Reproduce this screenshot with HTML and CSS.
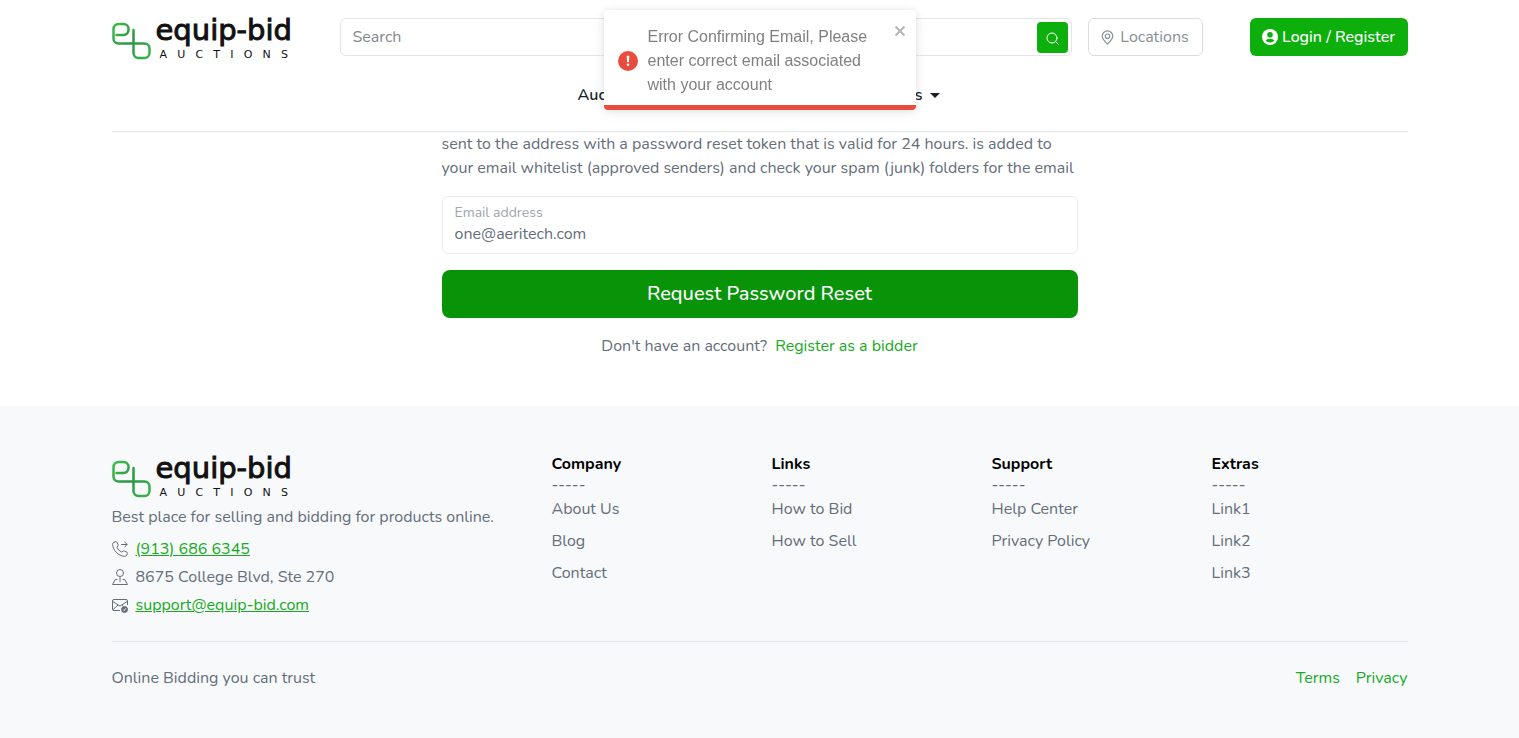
FILE: index.html
```html
<!DOCTYPE html>
<html lang="en">
<head>
<meta charset="utf-8">
<meta name="viewport" content="width=device-width, initial-scale=1">
<title>Equip-Bid Auctions</title>
<link rel="stylesheet" href="styles.css">
</head>
<body>
<svg class="defs" width="0" height="0" aria-hidden="true">
  <linearGradient id="leaf" x1="0" y1="0" x2="1" y2="1">
    <stop offset="0" stop-color="#3cc045"/><stop offset=".5" stop-color="#2b9546"/><stop offset="1" stop-color="#35b84a"/>
  </linearGradient>
  <symbol id="mark" viewBox="0 0 40 46">
    <path d="M4.500 21H11.500a5 5 0 0 0 5-5V15a5 5 0 0 0-5-5H6.500a5 5 0 0 0-5 5V24.500a5 5 0 0 0 5 5H32.500a5 5 0 0 1 5 5V39a5 5 0 0 1-5 5H26.500a5 5 0 0 1-5-5V16" fill="none" stroke="url(#leaf)" stroke-width="2.500" stroke-linecap="round"/>
  </symbol>
</svg>

<header class="header">
  <div class="container">
    <div class="topbar">
      <a class="logo" href="#">
        <svg class="logo-mark" aria-hidden="true"><use href="#mark"/></svg>
        <span class="logo-words">
          <span class="logo-name">equip-bid</span>
          <span class="logo-sub"><span>A</span><span>U</span><span>C</span><span>T</span><span>I</span><span>O</span><span>N</span><span>S</span></span>
        </span>
      </a>
      <form class="search">
        <input class="search-input" type="search" placeholder="Search" aria-label="Search">
        <button class="search-button" type="submit" aria-label="Submit search">
          <svg width="13" height="13" viewBox="0 0 13 13" fill="none" stroke="currentColor" stroke-linecap="round"><circle cx="6" cy="6" r="5"/><path d="M9.600 9.600 12.300 12.300"/></svg>
        </button>
      </form>
      <button class="locations" type="button">
        <svg width="13" height="15" viewBox="0 0 13 15" fill="none" stroke="currentColor" stroke-width="1.200"><path d="M6.500 14C4 11.500 1.200 9 1.200 6.200a5.300 5.300 0 0 1 10.600 0C11.800 9 9 11.500 6.500 14Z"/><circle cx="6.500" cy="6.200" r="2.200"/></svg>
        Locations
      </button>
      <a class="login" href="#">
        <svg width="16" height="16" viewBox="0 0 16 16"><circle cx="8" cy="8" r="8" fill="#fff"/><circle cx="8" cy="5.800" r="2.800" fill="#0caf0c"/><path d="M3.500 11.200Q5 9.700 8 9.700T12.500 11.200Q11 13.500 8 13.500T3.500 11.200Z" fill="#0caf0c"/></svg>
        Login / Register
      </a>
    </div>
    <nav class="nav">
      <button class="nav-link" type="button">Auctions</button>
      <button class="nav-link" type="button">Links <span class="caret"></span></button>
    </nav>
  </div>
</header>

<main class="container">
  <form class="reset">
    <p class="intro">sent to the address with a password reset token that is valid for 24 hours. is added to<br>your email whitelist (approved senders) and check your spam (junk) folders for the email</p>
    <div class="field">
      <label for="email">Email address</label>
      <input id="email" type="email" value="one@aeritech.com">
    </div>
    <button class="submit" type="submit">Request Password Reset</button>
    <p class="signup">Don't have an account? <a href="#">Register as a bidder</a></p>
  </form>
</main>

<footer class="footer">
  <div class="container">
    <div class="columns">
      <div class="about">
        <a class="logo" href="#">
          <svg class="logo-mark" aria-hidden="true"><use href="#mark"/></svg>
          <span class="logo-words">
            <span class="logo-name">equip-bid</span>
            <span class="logo-sub"><span>A</span><span>U</span><span>C</span><span>T</span><span>I</span><span>O</span><span>N</span><span>S</span></span>
          </span>
        </a>
        <p class="tagline">Best place for selling and bidding for products online.</p>
        <ul class="contacts">
          <li>
            <svg width="16" height="16" viewBox="0 0 16 16" fill="none" stroke="currentColor" stroke-linecap="round" stroke-linejoin="round"><path d="M1.900 1.300 3.600.6Q4.300.4 4.700 1L6.100 3.800Q6.300 4.300 6 4.800L5.100 6Q4.900 6.300 5.100 6.700 6.500 9.500 9.300 10.900 9.700 11.100 10 10.900L11.200 10Q11.700 9.700 12.200 9.900L15 11.300Q15.600 11.700 15.400 12.400L14.700 14.100Q14.200 15.500 12.500 15.400C6.500 14.900 1.100 9.500.6 3.500Q.5 1.900 1.900 1.300ZM9.500 3.500H15M12.800 1.200 15.200 3.500 12.800 5.800"/></svg>
            <a href="#">(913) 686 6345</a>
          </li>
          <li>
            <svg width="16" height="16" viewBox="0 0 16 16" fill="none" stroke="currentColor" stroke-linejoin="round"><circle cx="8" cy="4" r="3.500"/><path d="M8 7.500V13M5.500 10.500H3.200L.6 15.500H15.400L12.800 10.500H10.500"/></svg>
            <span>8675 College Blvd, Ste 270</span>
          </li>
          <li>
            <svg width="16" height="16" viewBox="0 0 16 16" fill="none" stroke="currentColor" stroke-linejoin="round"><path d="M8 13.500H2A1.500 1.500 0 0 1 .5 12V4A1.500 1.500 0 0 1 2 2.500H14A1.500 1.500 0 0 1 15.500 4V8M.7 4.500 8 9 15.300 4.500M.8 12.800 6 8M10 8 11 8.700"/><circle cx="12.500" cy="12.500" r="3" fill="currentColor"/><path d="M11.200 12.500 12.200 13.600 13.800 11.400" stroke="#f8f9fb"/></svg>
            <a href="#">support@equip-bid.com</a>
          </li>
        </ul>
      </div>
      <section class="links">
        <h2>Company</h2><p>-----</p>
        <ul><li><a href="#">About Us</a></li><li><a href="#">Blog</a></li><li><a href="#">Contact</a></li></ul>
      </section>
      <section class="links">
        <h2>Links</h2><p>-----</p>
        <ul><li><a href="#">How to Bid</a></li><li><a href="#">How to Sell</a></li></ul>
      </section>
      <section class="links">
        <h2>Support</h2><p>-----</p>
        <ul><li><a href="#">Help Center</a></li><li><a href="#">Privacy Policy</a></li></ul>
      </section>
      <section class="links">
        <h2>Extras</h2><p>-----</p>
        <ul><li><a href="#">Link1</a></li><li><a href="#">Link2</a></li><li><a href="#">Link3</a></li></ul>
      </section>
    </div>
    <div class="legal">
      <span>Online Bidding you can trust</span>
      <div class="legal-links"><a href="#">Terms</a><a href="#">Privacy</a></div>
    </div>
  </div>
</footer>

<div class="toast" role="alert">
  <div class="toast-body">
    <svg class="toast-icon" width="20" height="20" viewBox="0 0 20 20"><circle cx="10" cy="10" r="10" fill="#e74c3c"/><path d="M8.700 4.800h2.600l-.4 6.400H9.100Z" fill="#fff"/><circle cx="10" cy="13.700" r="1.300" fill="#fff"/></svg>
    <p>Error Confirming Email, Please enter correct email associated with your account</p>
    <button class="toast-close" type="button" aria-label="Close">
      <svg width="12" height="12" viewBox="0 0 12 12" stroke="currentColor" stroke-width="2"><path d="M1.500 1.500 10.500 10.500M10.500 1.500 1.500 10.500"/></svg>
    </button>
  </div>
  <div class="toast-progress"></div>
</div>
</body>
</html>
```
FILE: styles.css
```css
* { box-sizing: border-box; }
body {
  margin: 0;
  background: #fff;
  color: #646e7a;
  font: 16px/24px Nunito, Lato, sans-serif;
}
p, ul, h2 { margin: 0; padding: 0; }
ul { list-style: none; }
a { color: #16ab1e; text-decoration: none; }
button, input { font: inherit; }
button { cursor: pointer; }
svg { flex: none; }
.defs { position: absolute; }
.container { max-width: 1320px; margin: 0 auto; padding: 0 12px; }

.header .container { padding-top: 14px; }
.topbar { display: flex; align-items: center; }
.logo { display: flex; gap: 4px; width: 181px; height: 46px; color: #111; }
.logo-mark { width: 40px; height: 46px; }
.logo-words { display: flex; flex-direction: column; }
.logo-name { font: 29px/32px "DejaVu Sans", sans-serif; -webkit-text-stroke: 1px #111; }
.logo-sub {
  display: flex;
  justify-content: space-between;
  padding: 0 4px;
  font: 11px/18px "DejaVu Sans", sans-serif;
}
.search {
  display: flex;
  flex: 1;
  align-items: center;
  height: 38px;
  margin: 0 16px 0 47px;
  padding: 0 3px 0 12px;
  border: 1px solid #e3e6ea;
  border-radius: 6px;
}
.search-input { flex: 1; min-width: 0; padding: 0; border: 0; outline: 0; background: none; color: #646e7a; }
.search-input::placeholder { color: #83888f; opacity: 1; }
.search-button {
  display: grid;
  place-items: center;
  width: 31px;
  height: 31px;
  padding: 2px 0 0;
  border: 0;
  border-radius: 4px;
  background: #0caf0c;
  color: #fff;
}
.locations, .login {
  display: flex;
  align-items: center;
  justify-content: center;
  height: 38px;
  border-radius: 6px;
}
.locations { gap: 6px; min-width: 115px; padding: 0 12px; border: 1px solid #d9dddf; background: #fff; color: #879097; }
.login { gap: 4px; min-width: 158px; margin-left: 47px; padding: 0 12px; background: #0caf0c; color: #fff; font-weight: 500; }
.nav { display: flex; justify-content: space-between; width: 364px; margin: 15px auto 0; padding-bottom: 16px; }
.nav-link {
  display: flex;
  align-items: center;
  gap: 7px;
  padding: 8px 2px 8px 0;
  border: 0;
  background: none;
  color: #1b1f29;
  font-weight: 600;
}
.caret { border: 5px solid transparent; border-top-color: currentColor; border-bottom: 0; }
.header .container::after { content: ""; display: block; border-top: 1px solid #e3e6ea; }

.reset { max-width: 636px; margin: 0 auto; padding-bottom: 48px; }
.field {
  display: flex;
  flex-direction: column;
  height: 58px;
  margin: 16px 0;
  padding: 6px 12px;
  border: 1px solid #e9ecef;
  border-radius: 6px;
}
.field label { color: #a0a5ab; font-size: 14px; line-height: 20px; }
.field input { height: 22px; padding: 0; border: 0; outline: 0; background: none; color: #646e7a; }
.submit {
  display: block;
  width: 100%;
  height: 48px;
  border: 0;
  border-radius: 8px;
  background: #099309;
  color: #fff;
  font-size: 20px;
  font-weight: 500;
}
.signup { margin-top: 16px; text-align: center; }
.signup a { margin-left: 4px; }

.footer { padding: 46px 0 48px; background: #f8f9fb; }
.columns { display: grid; grid-template-columns: 2fr 1fr 1fr 1fr 1fr; margin-right: -24px; padding-bottom: 24px; }
.tagline { margin-top: 7px; }
.contacts { display: flex; flex-direction: column; gap: 4px; margin-top: 8px; }
.contacts li { display: flex; align-items: center; gap: 8px; }
.contacts a { text-decoration: underline; }
.links { padding-top: 2px; }
.links h2 { color: #000; font-size: 16px; line-height: 20px; }
.links p { line-height: 23px; }
.links ul { display: flex; flex-direction: column; gap: 8px; }
.links a { color: #646e7a; }
.legal { display: flex; justify-content: space-between; padding-top: 24px; border-top: 1px solid #e3e6ea; }
.legal-links { display: flex; gap: 16px; }

.toast {
  position: fixed;
  top: 10px;
  right: 0;
  left: 0;
  width: 312px;
  margin: 0 auto;
  overflow: hidden;
  border-radius: 4px;
  background: #fff;
  box-shadow: 0 1px 10px rgba(0, 0, 0, .1), 0 2px 15px rgba(0, 0, 0, .05);
  color: #808080;
  font: 16px/24px "Liberation Sans", Arial, sans-serif;
}
.toast-body { display: flex; align-items: flex-start; gap: 10px; padding: 15px 10px 8px 14px; }
.toast-icon { align-self: center; }
.toast-body p { flex: 1; }
.toast-close { display: flex; padding: 0; border: 0; background: none; color: #b5b5b5; }
.toast-progress { height: 5px; background: #e74c3c; }
```
